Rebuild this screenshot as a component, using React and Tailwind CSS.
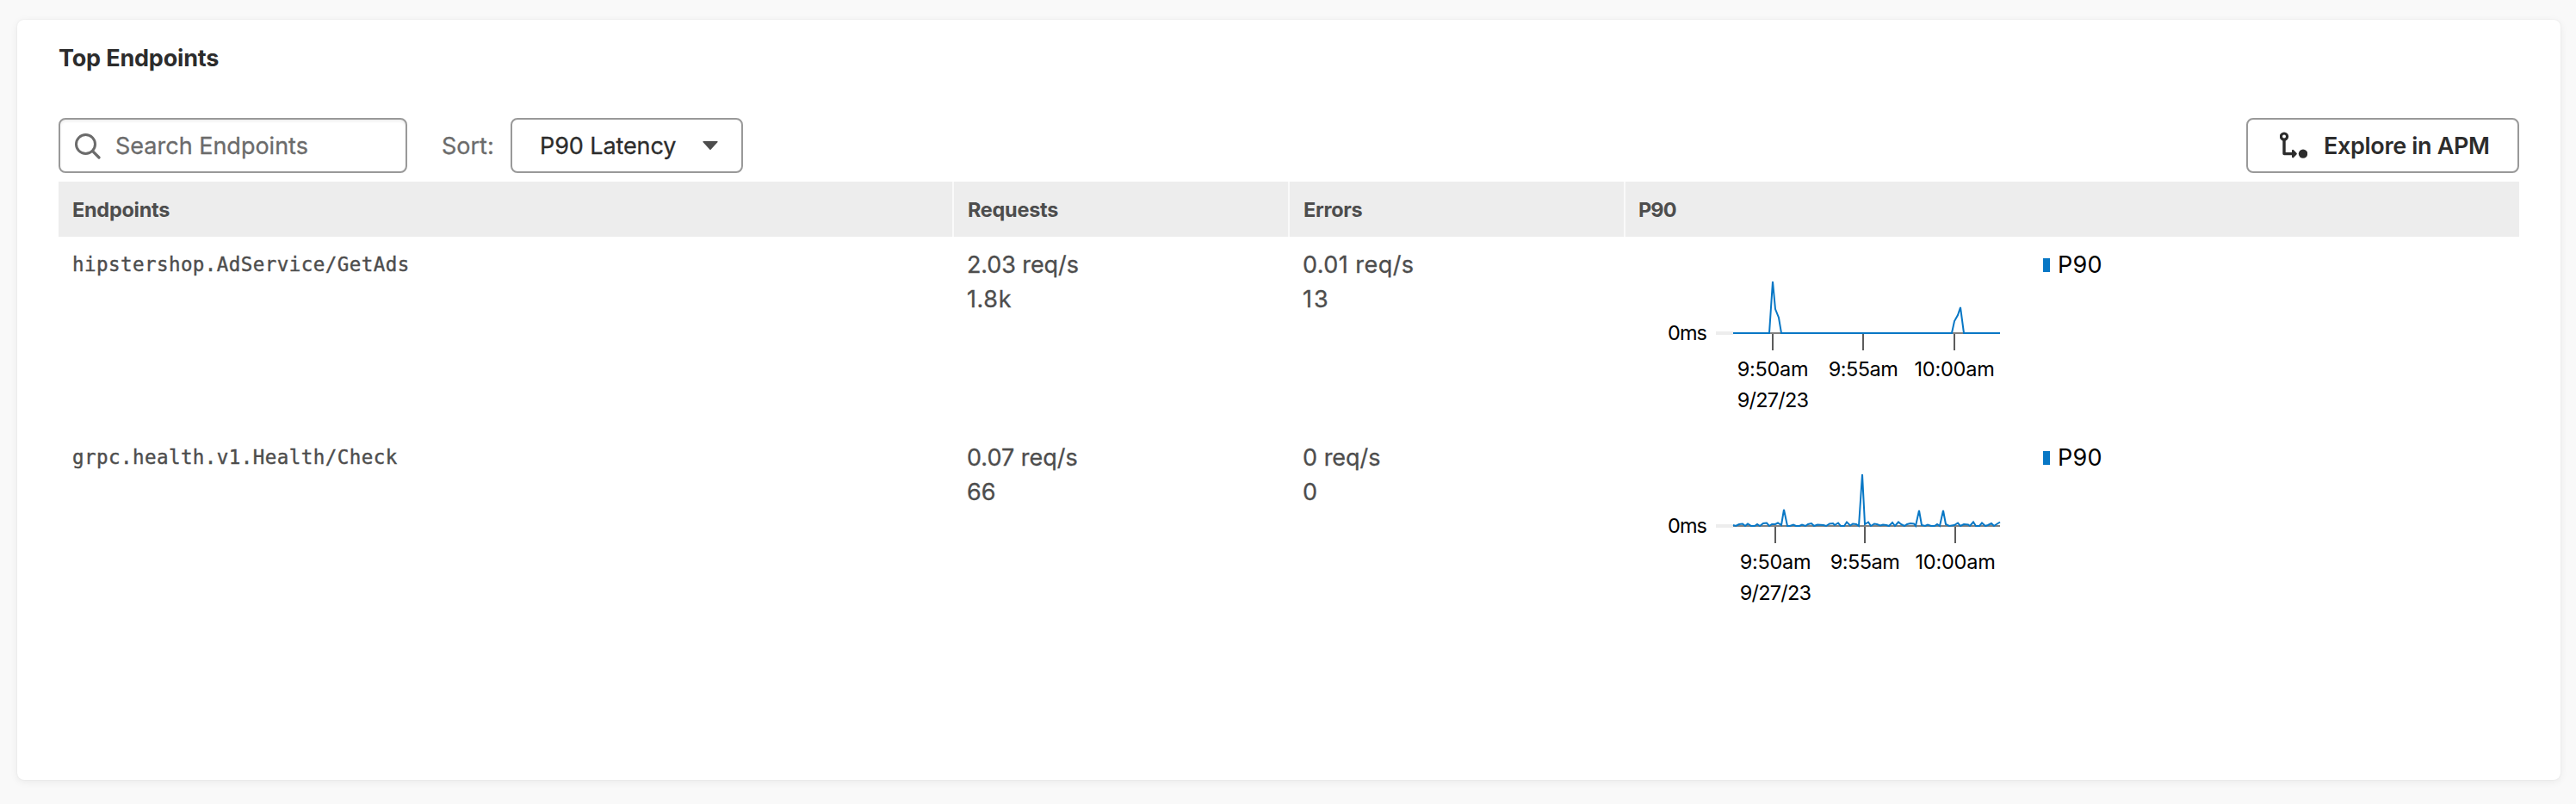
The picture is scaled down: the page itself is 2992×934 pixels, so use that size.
const rows = [
  {
    name: "hipstershop.AdService/GetAds",
    req: ["2.03 req/s", "1.8k"],
    err: ["0.01 req/s", "13"],
    errTracking: ["tracking-[0.45px]", "tracking-[2px]"],
    reqTracking: ["tracking-[-0.1px]", "tracking-[0.6px]"],
    ticks: [2059, 2164, 2270],
    points:
      "2013,56 2055,56 2059,-4 2062,28 2066,38 2069,56 2267,56 2270,42 2274,35 2277,26 2281,56 2323,56",
  },
  {
    name: "grpc.health.v1.Health/Check",
    req: ["0.07 req/s", "66"],
    err: ["0 req/s", "0"],
    errTracking: ["", ""],
    reqTracking: ["", ""],
    ticks: [2062, 2166, 2271],
    points:
      "2013,55 2016,56 2020,54 2024,53.5 2027,56 2030,53.5 2034,56 2038,56 2041,54 2044,56 2048,53 2052,52.5 2055,56 2058,54 2062,54 2065,52.5 2069,55 2072,37 2076,56 2079,56 2083,54.5 2086,56 2090,56 2093,54.5 2097,56 2100,54 2104,53 2107,56 2111,54.5 2118,55 2121,56 2125,53.5 2129,53 2131,55 2135,52.5 2138,56 2142,56 2145,51.5 2149,55.5 2152,53.5 2156,54 2159,56 2163,-4 2166,54 2170,51.5 2173,56 2177,53.5 2180,54 2184,55.5 2187,54.5 2191,55 2194,56 2198,52 2201,56 2205,51.5 2208,54 2212,56 2215,54 2219,53 2223,53.5 2225,56 2229,38 2232,55 2236,56 2239,54.5 2243,56 2247,56 2250,54 2253,56 2257,38 2260,54 2264,56 2270,55 2274,52.5 2277,56 2281,54 2286,54.5 2288,56 2292,51.5 2295,56 2299,56 2302,52.5 2306,56 2309,55 2313,53 2316,56 2319,54 2323,51.5",
  },
];

const tickLabels = [
  { text: "9:50am", tracking: "tracking-[-0.3px]" },
  { text: "9:55am", tracking: "tracking-[-0.5px]" },
  { text: "10:00am", tracking: "tracking-[-0.2px]" },
];
const columns = "grid grid-cols-[1040px_390px_390px_1038px]";

function Chart({ row }) {
  return (
    <svg
      className="h-[224px] w-[485px] shrink-0 font-[Inter,sans-serif] text-[23.5px]"
      viewBox="1888 -56 485 224"
    >
      <path d="M1993 56H2013" stroke="#ededed" strokeWidth="4" />
      <path d="M2013 56H2323" stroke="#818181" strokeWidth="2" />
      {row.ticks.map((x) => (
        <path key={x} d={`M${x} 57V76`} stroke="#5c5c5c" strokeWidth="2" />
      ))}
      <polyline points={row.points} fill="none" stroke="#0877c5" strokeWidth="2" />
      <text x="1937" y="64" className="tracking-[-0.9px]">
        0ms
      </text>
      {tickLabels.map((label, i) => (
        <text key={label.text} x={row.ticks[i]} y="106" textAnchor="middle" className={label.tracking}>
          {label.text}
        </text>
      ))}
      <text x={row.ticks[0]} y="142" textAnchor="middle" className="tracking-[-0.75px]">
        9/27/23
      </text>
    </svg>
  );
}

function SearchIcon() {
  return (
    <svg className="h-8 w-8" viewBox="0 0 32 32" fill="none" stroke="#6b6b6b" strokeWidth="3">
      <circle cx="13.5" cy="14.5" r="11" />
      <path d="M21.4 22.4L29 30" strokeLinecap="round" strokeWidth="3.2" />
    </svg>
  );
}

function TraceIcon() {
  return (
    <svg className="h-8 w-8" viewBox="0 0 32 32" fill="none" stroke="#2c2c2c" strokeLinecap="round" strokeLinejoin="round">
      <circle cx="5" cy="5.6" r="3.6" strokeWidth="3.2" />
      <path d="M5 10V25.6H18" strokeWidth="3.4" strokeLinecap="butt" />
      <path d="M15.2 22L18.6 25.6L15.2 29.2Z" fill="#2c2c2c" strokeWidth="2.4" />
      <circle cx="27" cy="25.6" r="5.2" fill="#2c2c2c" stroke="none" />
    </svg>
  );
}

function Values({ lines, tracking }) {
  return (
    <div className="pt-[13px] pl-[15px] text-[27px] leading-[40px] [-webkit-text-stroke:0.3px_#4d4d4d]">
      {lines.map((line, i) => (
        <div key={i} className={tracking[i]}>
          {line}
        </div>
      ))}
    </div>
  );
}

export default function App() {
  return (
    <div className="h-[934px] w-[2992px] overflow-hidden bg-[#f9f9f9] pt-[23px] pl-5 font-[Inter,sans-serif] whitespace-nowrap text-[#4d4d4d]">
      <section className="h-[883px] w-[2954px] rounded-lg bg-white px-12 pt-[25px] shadow-[0_2px_10px_rgba(0,0,0,0.07),0_0_2px_rgba(0,0,0,0.07)]">
        <h2 className="text-[27px] leading-[40px] font-bold tracking-[-0.18px] text-[#2c2c2c]">
          Top Endpoints
        </h2>

        <div className="mt-[49px] flex h-16 items-center text-[27px]">
          <div className="flex h-16 w-[405px] items-center rounded-lg border-2 border-[#999] pl-4 text-[#6b6b6b] shadow-[inset_0_2px_3px_rgba(0,0,0,0.07)]">
            <SearchIcon />
            <span className="ml-[16px] pt-[2px] [-webkit-text-stroke:0.3px_#6b6b6b]">Search Endpoints</span>
          </div>
          <span className="ml-10 w-[62px] pt-[2px] text-[#6b6b6b] [-webkit-text-stroke:0.3px_#6b6b6b]">Sort:</span>
          <button className="ml-[18px] flex h-16 w-[270px] items-center rounded-lg border-2 border-[#999] pl-[32px] text-[#2c2c2c]">
            <span className="w-[159px] pt-[2px] text-left tracking-[-0.1px] [-webkit-text-stroke:0.3px_#2c2c2c]">P90 Latency</span>
            <svg className="ml-[30px] h-[10px] w-[18px]" viewBox="0 0 18 10" fill="#4d4d4d">
              <path d="M1 0H17Q18 0.4 17.4 1.2L9.8 9.4Q9 10.4 8.2 9.4L0.6 1.2Q0 0.4 1 0Z" />
            </svg>
          </button>
          <button className="ml-auto flex h-16 w-[317px] items-center rounded-lg border-2 border-[#999] pl-[37px] text-[#2c2c2c]">
            <TraceIcon />
            <span className="ml-[19px] pt-[2px] font-semibold tracking-[-0.33px]">Explore in APM</span>
          </button>
        </div>

        <div className={`mt-[10px] h-16 bg-[#ededed] text-[23.5px] leading-[66px] font-bold tracking-[-0.28px] ${columns}`}>
          <div className="h-16 border-r-2 border-[#fafafa] pl-4">Endpoints</div>
          <div className="h-16 border-r-2 border-[#fafafa] pl-4">Requests</div>
          <div className="h-16 border-r-2 border-[#fafafa] pl-4">Errors</div>
          <div className="h-16 pl-[15px] tracking-[-0.9px]">P90</div>
        </div>

        {rows.map((row) => (
          <div key={row.name} className={`h-[224px] ${columns}`}>
            <div className="pt-3 pl-4 font-['DejaVu_Sans_Mono',monospace] text-[22.5px] leading-[40px] tracking-[0.44px] [-webkit-text-stroke:0.4px_#4d4d4d]">
              {row.name}
            </div>
            <Values lines={row.req} tracking={row.reqTracking} />
            <Values lines={row.err} tracking={row.errTracking} />
            <div className="flex text-[27px] leading-[40px] text-black">
              <Chart row={row} />
              <span className="mt-[25px] h-4 w-2 bg-[#0877c5]" />
              <span className="ml-[9px] pt-[13px] tracking-[0.3px]">P90</span>
            </div>
          </div>
        ))}
      </section>
    </div>
  );
}
